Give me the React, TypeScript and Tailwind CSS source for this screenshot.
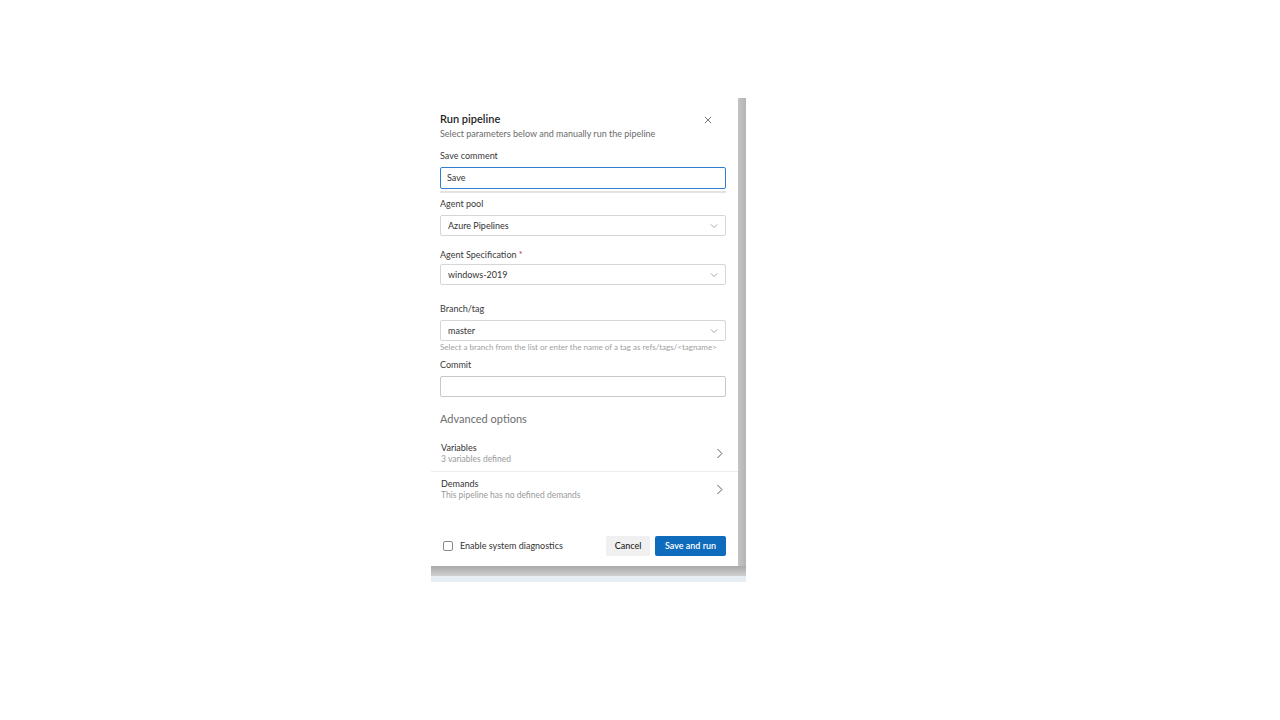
import React from 'react';

const Chevron: React.FC<{ dir?: 'down' | 'right'; className?: string }> = ({ dir = 'down', className }) => (
  <svg viewBox="0 0 16 16" className={className} fill="none" stroke="currentColor" strokeWidth={1.2}>
    {dir === 'down' ? <path d="M3 5.5l5 5 5-5" /> : <path d="M5.5 2.5l5.5 5.5-5.5 5.5" />}
  </svg>
);

const SelectBox: React.FC<{ value: string }> = ({ value }) => (
  <div className="flex h-[21px] items-center justify-between rounded-[2px] border border-[#d6d6d6] bg-white pl-[7px] pr-[6px]">
    <span className="text-[9px] text-[#333]">{value}</span>
    <Chevron className="h-[10px] w-[10px] text-[#8a8a8a]" />
  </div>
);

const Label: React.FC<{ children: React.ReactNode }> = ({ children }) => (
  <div className="text-[9px] leading-[12px] text-[#3a3a3a]">{children}</div>
);

const OptionRow: React.FC<{ title: string; sub: string }> = ({ title, sub }) => (
  <div className="flex items-center justify-between py-[6px] pl-[10px] pr-[12px]">
    <div className="flex flex-col">
      <span className="text-[9px] leading-[12px] text-[#333]">{title}</span>
      <span className="text-[8.5px] leading-[11px] text-[#9a9a9a]">{sub}</span>
    </div>
    <Chevron dir="right" className="h-[13px] w-[13px] text-[#555]" />
  </div>
);

export default function App() {
  return (
    <div className="min-h-screen w-full bg-white pl-[431px] pt-[98px] font-['Lato',_sans-serif]">
      <div className="flex w-[315px] flex-col">
        <div className="flex h-[468px]">
          {/* Dialog */}
          <div className="flex w-[307px] flex-col rounded-br-[6px] bg-white pl-[9px] pr-[12px] pt-[14px]">
            <div className="flex items-start justify-between">
              <div className="flex flex-col">
                <span className="text-[11px] font-semibold leading-[14px] text-[#1f1f1f]">Run pipeline</span>
                <span className="mt-[2px] text-[9px] leading-[12px] text-[#6b6b6b]">
                  Select parameters below and manually run the pipeline
                </span>
              </div>
              <svg viewBox="0 0 16 16" className="mr-[13px] mt-[3px] h-[10px] w-[10px] text-[#555]" stroke="currentColor" strokeWidth={1.3}>
                <path d="M3 3l10 10M13 3L3 13" />
              </svg>
            </div>

            <div className="mt-[10px]">
              <Label>Save comment</Label>
              <div className="mt-[5px] flex h-[22px] items-center rounded-[2px] border-[1.5px] border-[#2f7fd1] bg-white pl-[6px]">
                <span className="text-[9px] text-[#333]">Save</span>
              </div>
              <div className="mt-[2px] h-[2px] bg-[#e3e3e3]" />
            </div>

            <div className="mt-[5px]">
              <Label>Agent pool</Label>
              <div className="mt-[5px]">
                <SelectBox value="Azure Pipelines" />
              </div>
            </div>

            <div className="mt-[13px]">
              <Label>
                Agent Specification <span className="text-[#c4314b]">*</span>
              </Label>
              <div className="mt-[3px]">
                <SelectBox value="windows-2019" />
              </div>
            </div>

            <div className="mt-[18px]">
              <Label>Branch/tag</Label>
              <div className="mt-[5px]">
                <SelectBox value="master" />
              </div>
              <div className="mt-[1px] text-[8px] leading-[10px] text-[#a0a0a0]">
                Select a branch from the list or enter the name of a tag as refs/tags/&lt;tagname&gt;
              </div>
            </div>

            <div className="mt-[7px]">
              <Label>Commit</Label>
              <div className="mt-[5px] h-[21px] rounded-[2px] border border-[#c8c8c8] bg-white" />
            </div>

            <div className="mt-[15px] text-[11px] leading-[14px] text-[#6e6e6e]">Advanced options</div>

            <div className="-ml-[9px] -mr-[12px] mt-[10px] flex flex-col">
              <OptionRow title="Variables" sub="3 variables defined" />
              <div className="h-px bg-[#ececec]" />
              <OptionRow title="Demands" sub="This pipeline has no defined demands" />
            </div>

            <div className="mt-[29px] flex h-[20px] items-center justify-between">
              <label className="flex items-center pl-[3px]">
                <span className="h-[10px] w-[10px] rounded-[2px] border border-[#8a8a8a] bg-white" />
                <span className="ml-[7px] text-[9px] text-[#333]">Enable system diagnostics</span>
              </label>
              <div className="flex gap-[5px]">
                <button className="h-[20px] w-[44px] rounded-[2px] bg-[#f0f0f0] text-[9px] font-medium text-[#222]">
                  Cancel
                </button>
                <button className="h-[20px] w-[71px] rounded-[2px] bg-[#0f6cbd] text-[9px] font-semibold text-white">
                  Save and run
                </button>
              </div>
            </div>
          </div>
          <div className="w-[8px] bg-gradient-to-r from-[#c4c4c4] to-[#b4b4b4]" />
        </div>
        <div className="h-[10px] bg-gradient-to-b from-[#a9a9a9] to-[#cfcfcf]" />
        <div className="h-[6px] bg-[#e6eef4]" />
      </div>
    </div>
  );
}
